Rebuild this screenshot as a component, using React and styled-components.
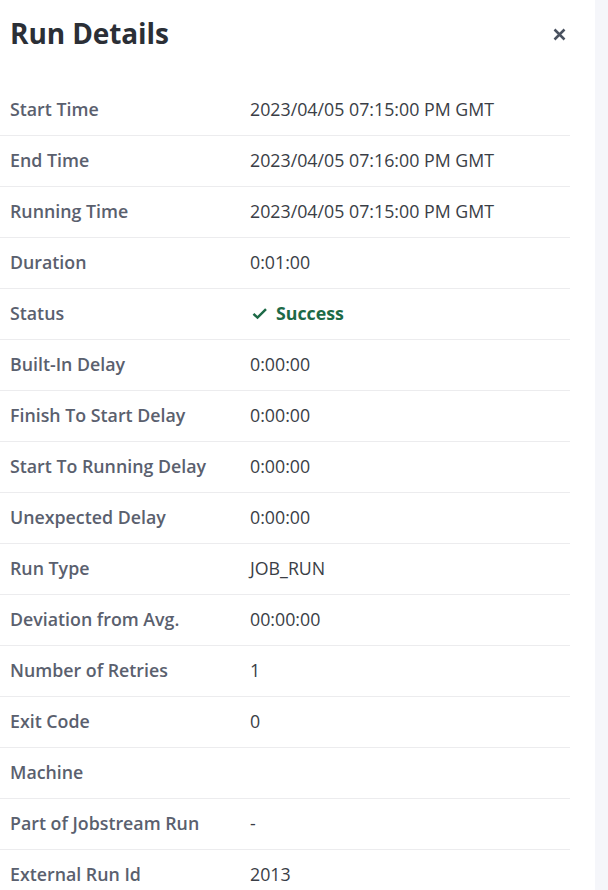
import React from "react";
import styled, { createGlobalStyle } from "styled-components";

const Global = createGlobalStyle`
  html, body { margin: 0; padding: 0; background: #f5f6fa; }
  body { font-family: "Open Sans", "Noto Sans", sans-serif; overflow: hidden; }
`;

const Page = styled.div`
  display: flex;
  width: 608px;
  height: 890px;
  background: #f5f6fa;
`;

const Panel = styled.div`
  width: 595px;
  height: 890px;
  background: #ffffff;
  overflow: hidden;
`;

const Header = styled.div`
  display: flex;
  align-items: center;
  justify-content: space-between;
  width: 570px;
  height: 66px;
  margin-bottom: 19px;
  box-sizing: border-box;
  padding: 0 0 0 10px;
`;

const Title = styled.h1`
  margin: 0;
  font-size: 28px;
  font-weight: 700;
  color: #2b2f36;
  letter-spacing: -0.1px;
`;

const CloseButton = styled.button`
  display: flex;
  align-items: center;
  justify-content: center;
  width: 22px;
  height: 24px;
  padding: 0;
  margin-top: 2px;
  border: none;
  background: none;
  color: #4a5260;
  cursor: pointer;
`;

const Table = styled.div`
  width: 570px;
`;

const Row = styled.div`
  display: grid;
  grid-template-columns: 250px 1fr;
  align-items: center;
  height: 50px;
  border-bottom: 1px solid #ececee;
`;

const Label = styled.div`
  padding-left: 10px;
  margin-top: -2px;
  font-size: 17.8px;
  font-weight: 600;
  color: #5a606e;
`;

const Value = styled.div`
  display: flex;
  align-items: center;
  gap: 8px;
  margin-top: -2px;
  font-size: 17.8px;
  color: ${(p) => (p.$success ? "#1d6a47" : "#3a3e46")};
  font-weight: ${(p) => (p.$success ? 700 : 400)};
`;

const rows = [
  ["Start Time", "2023/04/05 07:15:00 PM GMT"],
  ["End Time", "2023/04/05 07:16:00 PM GMT"],
  ["Running Time", "2023/04/05 07:15:00 PM GMT"],
  ["Duration", "0:01:00"],
  ["Status", "Success", true],
  ["Built-In Delay", "0:00:00"],
  ["Finish To Start Delay", "0:00:00"],
  ["Start To Running Delay", "0:00:00"],
  ["Unexpected Delay", "0:00:00"],
  ["Run Type", "JOB_RUN"],
  ["Deviation from Avg.", "00:00:00"],
  ["Number of Retries", "1"],
  ["Exit Code", "0"],
  ["Machine", ""],
  ["Part of Jobstream Run", "-"],
  ["External Run Id", "2013"],
];

export default function App() {
  return (
    <>
      <Global />
      <Page>
        <Panel>
          <Header>
            <Title>Run Details</Title>
            <CloseButton aria-label="Close">
              <svg width="13" height="13" viewBox="0 0 13 13">
                <path d="M1.5 1.5L11.5 11.5M11.5 1.5L1.5 11.5" stroke="currentColor" strokeWidth="2.5" />
              </svg>
            </CloseButton>
          </Header>
          <Table>
            {rows.map(([label, value, success]) => (
              <Row key={label}>
                <Label>{label}</Label>
                <Value $success={success}>
                  {success && (
                    <svg width="18" height="13" viewBox="0 0 18 13">
                      <path d="M3.5 6.8L7.5 10.6L16 2.2" fill="none" stroke="#1d6a47" strokeWidth="2.5" />
                    </svg>
                  )}
                  {value}
                </Value>
              </Row>
            ))}
          </Table>
        </Panel>
      </Page>
    </>
  );
}
